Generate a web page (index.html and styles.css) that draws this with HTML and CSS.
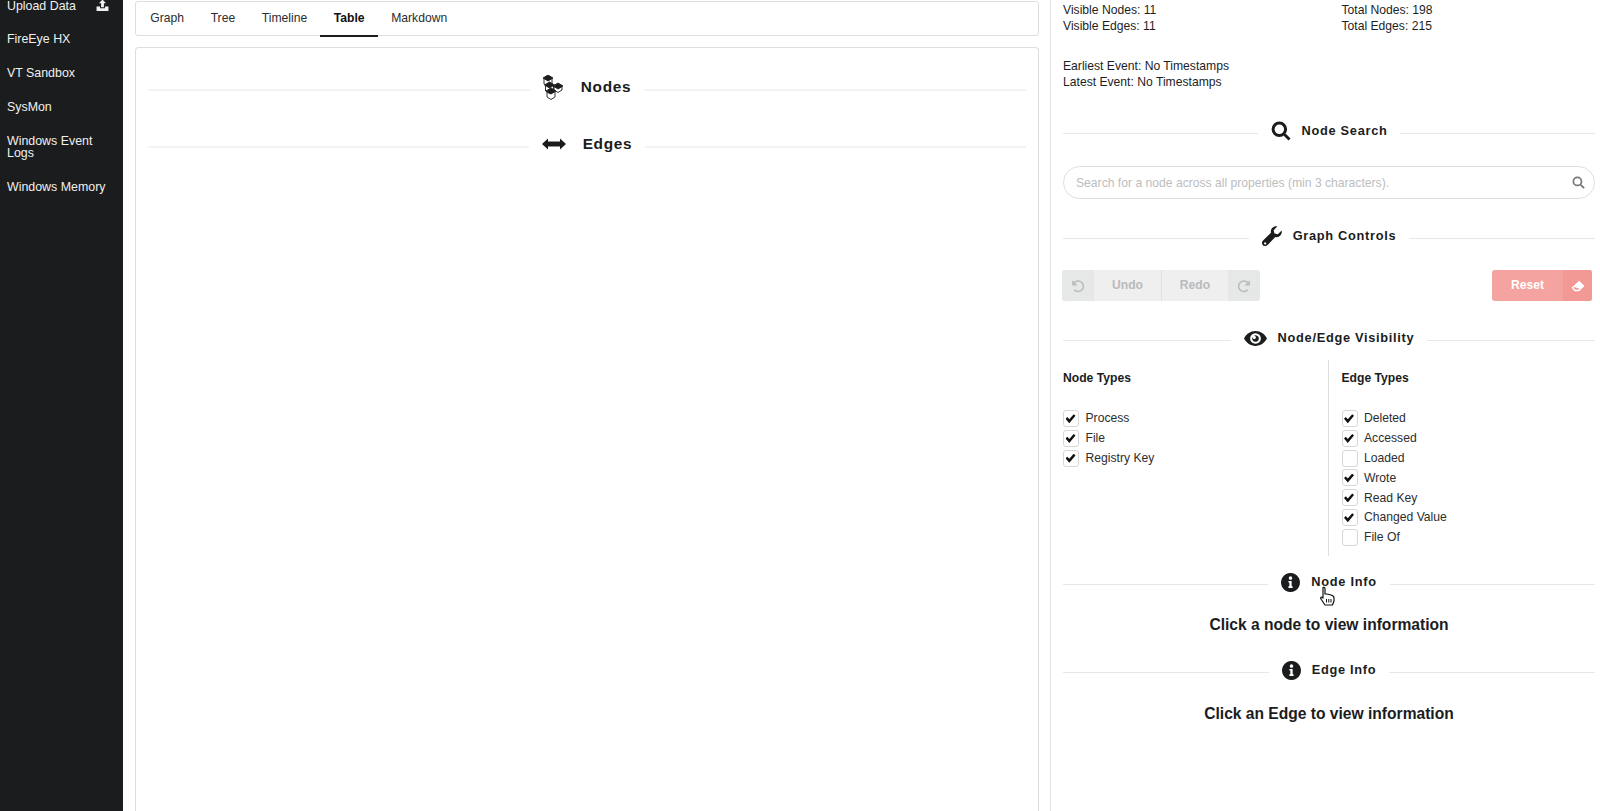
FILE: index.html
```html
<!DOCTYPE html>
<html lang="en">
<head>
<meta charset="utf-8">
<title>Graph</title>
<link rel="stylesheet" href="styles.css">
</head>
<body>
<nav class="sidebar">
  <a class="side-item side-upload"><span>Upload Data</span>
    <svg class="upload-icon" viewBox="0 0 24 24"><path d="M12 1 18.500 8H14.600V15H9.400V8H5.500ZM1 14H7.500V17H16.500V14H23V22H1Z"/></svg></a>
  <a class="side-item first">FireEye HX</a>
  <a class="side-item">VT Sandbox</a>
  <a class="side-item">SysMon</a>
  <a class="side-item">Windows Event Logs</a>
  <a class="side-item">Windows Memory</a>
</nav>
<main class="main">
  <div class="tabs">
    <a class="tab">Graph</a><a class="tab">Tree</a><a class="tab">Timeline</a><a class="tab active">Table</a><a class="tab">Markdown</a>
  </div>
  <section class="card">
    <div class="divider big nodes-div"><span class="dl">
      <svg class="ic cube" viewBox="0 0 20 25">
        <g class="cb" transform="translate(0 0)"><path class="t" d="M0 3 5 0 10 3 5 6Z"/><path d="M1 4V9L5 11.500 9 9V4"/></g>
        <g class="cb" transform="translate(1.500 7)"><path class="t" d="M0 3 5 0 10 3 5 6Z"/><path d="M1 4V9L5 11.500 9 9V4"/></g>
        <g class="cb" transform="translate(3 13)"><path class="t" d="M0 3 5 0 10 3 5 6Z"/><path d="M1 4V9L5 11.500 9 9V4"/></g>
        <g class="cb" transform="translate(10 8)"><path class="t" d="M0 3 5 0 10 3 5 6Z"/><path d="M1 4V7L5 9.500 9 7V4"/></g>
      </svg>
      Nodes</span></div>
    <div class="divider big edges-div"><span class="dl">
      <svg class="ic arrows" viewBox="0 0 24 12"><path d="M0 6 6 .5V3.500H18V.5L24 6 18 11.500V8.500H6V11.500Z"/></svg>
      Edges</span></div>
  </section>
</main>
<aside class="panel">
  <div class="stats">
    <div>Visible Nodes: 11<br>Visible Edges: 11</div>
    <div>Total Nodes: 198<br>Total Edges: 215</div>
  </div>
  <p class="events">Earliest Event: No Timestamps<br>Latest Event: No Timestamps</p>

  <div class="divider search-div"><span class="dl">
    <svg class="ic mag" viewBox="0 0 24 24"><circle cx="10" cy="10" r="7.500" fill="none" stroke="currentColor" stroke-width="3.600"/><path d="M15 17.500 17.500 15 23.500 21 21 23.500Z"/></svg>
    Node Search</span></div>
  <div class="search">
    <span>Search for a node across all properties (min 3 characters).</span>
    <svg class="search-ic" viewBox="0 0 24 24"><circle cx="10" cy="10" r="7.500" fill="none" stroke="currentColor" stroke-width="3.200"/><path d="M15 17.500 17.500 15 23.500 21 21 23.500Z"/></svg>
  </div>

  <div class="divider controls-div"><span class="dl">
    <svg class="ic wrench" viewBox="0 0 24 24"><path fill-rule="evenodd" d="M23.600 5.500C24.600 10 20.500 14.500 16 13.200L7 22.500C5 24.500 2.500 24.500 1 23-.5 21.500-.5 19 1.500 17L10.800 8C9.500 3.500 14-.8 18.500.4L14 5 15 9 19 10ZM3.800 19.500A1.300 1.300 0 1 0 3.810 19.500Z"/></svg>
    Graph Controls</span></div>
  <div class="controls">
    <div class="btn-group">
      <button class="btn-ic"><svg viewBox="0 0 24 24"><path class="sk" d="M5.500 6.500A9 9 0 1 1 5.500 18.500"/><path d="M2 2V11H11Z"/></svg></button>
      <button class="btn-txt">Undo</button>
      <button class="btn-txt redo">Redo</button>
      <button class="btn-ic"><svg viewBox="0 0 24 24"><path class="sk" d="M18.500 6.500A9 9 0 1 0 18.500 18.500"/><path d="M22 2V11H13Z"/></svg></button>
    </div>
    <button class="reset"><span class="reset-txt">Reset</span><span class="reset-ic"><svg viewBox="0 0 24 24"><path fill-rule="evenodd" d="M14 3 23 12 14 21H6L1 15ZM5.500 13.500 4 15 7.500 18.500H12.800L14.800 16.500Z"/></svg></span></button>
  </div>

  <div class="divider vis-div"><span class="dl">
    <svg class="ic eye" viewBox="0 0 28 18"><path fill-rule="evenodd" d="M14 0C20 0 25 3.500 28 9 25 14.500 20 18 14 18 8 18 3 14.500 0 9 3 3.500 8 0 14 0ZM14 2.500A6.500 6.500 0 1 0 14.010 2.500ZM14 5A4 4 0 1 1 13.990 5ZM12.500 5.800A2 2 0 1 0 12.510 5.800Z"/></svg>
    Node/Edge Visibility</span></div>
  <div class="types">
    <div class="type-col">
      <h4>Node Types</h4>
      <label class="chk on">Process</label>
      <label class="chk on">File</label>
      <label class="chk on">Registry Key</label>
    </div>
    <div class="type-col right">
      <h4>Edge Types</h4>
      <label class="chk on">Deleted</label>
      <label class="chk on">Accessed</label>
      <label class="chk">Loaded</label>
      <label class="chk on">Wrote</label>
      <label class="chk on">Read Key</label>
      <label class="chk on">Changed Value</label>
      <label class="chk">File Of</label>
    </div>
  </div>

  <div class="divider info-div"><span class="dl">
    <svg class="ic info" viewBox="0 0 20 20"><path fill-rule="evenodd" d="M10 0A10 10 0 1 1 9.990 0ZM10 3.500A1.800 1.800 0 1 0 10.010 3.500ZM7.800 8.300V10H8.800V14H7.800V15.700H12.200V14H11.200V8.300Z"/></svg>
    Node Info</span>
    <svg class="cursor" viewBox="0 0 16 20"><path d="M4 1.500C5 1 6 1.500 6 3V8L8 8 10 8.500 12 9C14 9.500 15 10.500 15 12V15L13.500 19H6L2 13C1 11.500 2 10.500 3.500 11.500L4 12Z" fill="#fff" stroke="#111" stroke-width="1.200" stroke-linejoin="round"/><path d="M7.500 13V16.500M9.800 13V16.500M12 13V16.500" stroke="#111" fill="none"/></svg>
  </div>
  <h3 class="msg msg-node">Click a node to view information</h3>

  <div class="divider info-div edge"><span class="dl">
    <svg class="ic info" viewBox="0 0 20 20"><path fill-rule="evenodd" d="M10 0A10 10 0 1 1 9.990 0ZM10 3.500A1.800 1.800 0 1 0 10.010 3.500ZM7.800 8.300V10H8.800V14H7.800V15.700H12.200V14H11.200V8.300Z"/></svg>
    Edge Info</span></div>
  <h3 class="msg msg-edge">Click an Edge to view information</h3>
</aside>
</body>
</html>
```
FILE: styles.css
```css
* { box-sizing: border-box; }
html, body { height: 100%; }
body {
  margin: 0;
  height: 811px;
  overflow: hidden;
  display: flex;
  background: #fff;
  color: #1d1e1f;
  font-family: "Liberation Sans", Arial, sans-serif;
  font-size: 12.150px;
  line-height: 16.300px;
}
svg { display: block; fill: currentColor; }

.sidebar {
  width: 123px;
  flex: none;
  background: #1a1c1d;
  color: #f0f0f0;
  padding: 0 7px;
  display: flex;
  flex-direction: column;
}
.side-item {
  display: block;
  font-size: 12.400px;
  line-height: 12px;
  margin-top: 22px;
}
.side-item.first { margin-top: 21px; }
.side-upload {
  display: flex;
  justify-content: space-between;
  align-items: center;
  margin-top: -1px;
  padding-right: 7px;
}
.upload-icon { width: 13px; height: 13px; }

.main {
  width: 928px;
  flex: none;
  padding: 1px 11px 0 12px;
  display: flex;
  flex-direction: column;
  border-right: 1px solid #dfe1e3;
}
.tabs {
  height: 35px;
  display: flex;
  padding-left: 1px;
  border: 1px solid #dcdee0;
  border-radius: 3px;
}
.tab {
  padding: 0 13.300px;
  line-height: 32px;
  height: 35px;
  color: #2c2d2e;
}
.tab.active {
  font-weight: bold;
  color: #111;
  border-bottom: 2px solid #1b1c1d;
}
.card {
  flex: 1;
  margin-top: 11px;
  padding: 0 12px;
  border: 1px solid #dcdee0;
  border-bottom: 0;
  border-radius: 4px 4px 0 0;
}

.divider {
  display: flex;
  align-items: center;
  white-space: nowrap;
  font-weight: bold;
  letter-spacing: .7px;
  font-size: 12.800px;
  height: 24px;
  color: #1b1c1d;
  position: relative;
}
.divider::before, .divider::after {
  content: "";
  flex: 1;
  height: 1px;
  background: #e5e7e9;
  transform: translateY(2px);
}
.dl { display: flex; align-items: center; padding: 0 13px; }
.ic { margin-right: 11px; flex: none; }
.big { font-size: 15.400px; }
.big::before, .big::after { transform: translateY(2.500px); }
.nodes-div { margin-top: 27px; }
.edges-div { margin-top: 33px; }
.cube { width: 20px; height: 25px; margin-right: 18px; }
.cb path { fill: none; stroke: currentColor; stroke-width: .9; }
.cb .t { fill: currentColor; }
.arrows { width: 24px; height: 12px; margin-right: 17px; }

.panel {
  flex: 1;
  min-width: 0;
  padding: 2px 5px 0 12px;
}
.stats { display: grid; grid-template-columns: 278.500px 1fr; }
.events { margin: 23.500px 0 0; }
.search-div { margin-top: 28.500px; }
.mag { width: 20px; height: 20px; }
.search {
  margin-top: 23px;
  height: 33px;
  display: flex;
  align-items: center;
  justify-content: space-between;
  padding: 0 9px 0 12px;
  border: 1px solid #dcdee0;
  border-radius: 17px;
  color: #bcbdbe;
}
.search-ic { width: 13px; height: 13px; color: #77797b; }
.controls-div { margin-top: 25px; }
.wrench { width: 20px; height: 20px; }
.controls {
  margin: 22px 0 0 -1px;
  display: flex;
  justify-content: space-between;
  padding-right: 3px;
}
.btn-group { display: flex; height: 31px; border-radius: 3px; overflow: hidden; background: #efeff0; }
button {
  border: 0;
  padding: 0;
  font: inherit;
  font-weight: bold;
  background: none;
  color: #b9babb;
}
.btn-ic { width: 32px; background: #e6e7e7; display: flex; align-items: center; justify-content: center; }
.btn-ic svg { width: 14px; height: 14px; fill: #b9babb; }
.btn-ic .sk { fill: none; stroke: #b9babb; stroke-width: 2.600; }
.btn-txt { width: 67px; padding-bottom: 1px; }
.btn-txt.redo { border-left: 1px solid #dfe0e1; }
.reset {
  width: 100px;
  height: 31px;
  display: flex;
  background: #f4a3a0;
  color: #fff;
  border-radius: 3px;
  overflow: hidden;
}
.reset-txt { flex: 1; line-height: 31px; }
.reset-ic { width: 29px; background: #f29996; display: flex; align-items: center; justify-content: center; }
.reset-ic svg { width: 14px; height: 14px; fill: #fff; }
.vis-div { margin-top: 25px; }
.eye { width: 23px; height: 15px; }
.types { display: grid; grid-template-columns: 265px 1fr; margin-top: 10px; }
.type-col { padding-top: 10px; min-height: 196px; }
.type-col.right { border-left: 1px solid #dcdee0; padding-left: 12.500px; }
h4 { margin: 0 0 22px; font-size: 12.150px; line-height: 16.500px; color: #1b1c1d; }
.chk {
  position: relative;
  display: flex;
  align-items: center;
  gap: 6.500px;
  height: 19.800px;
  color: #2c2d2e;
}
.chk::before {
  content: "";
  width: 14px;
  height: 15px;
  border: 1px solid #d6d7d8;
  border-radius: 3px;
  flex: none;
  background: #fff;
}
.chk.on::after {
  content: "";
  position: absolute;
  left: 2.500px;
  top: 5.500px;
  width: 10px;
  height: 9px;
  background: #111;
  clip-path: polygon(0 50%, 18% 32%, 38% 56%, 82% 0, 100% 18%, 38% 100%);
}
.info-div { margin-top: 14px; }
.info-div.edge { margin-top: 23px; }
.info { width: 19px; height: 19px; }
.cursor { position: absolute; left: 256px; top: 16px; width: 16px; height: 20px; }
.msg { margin: 20px 0 0; font-size: 15.600px; line-height: 21px; text-align: center; color: #1b1c1d; }
.msg-edge { margin-top: 21px; }
```
